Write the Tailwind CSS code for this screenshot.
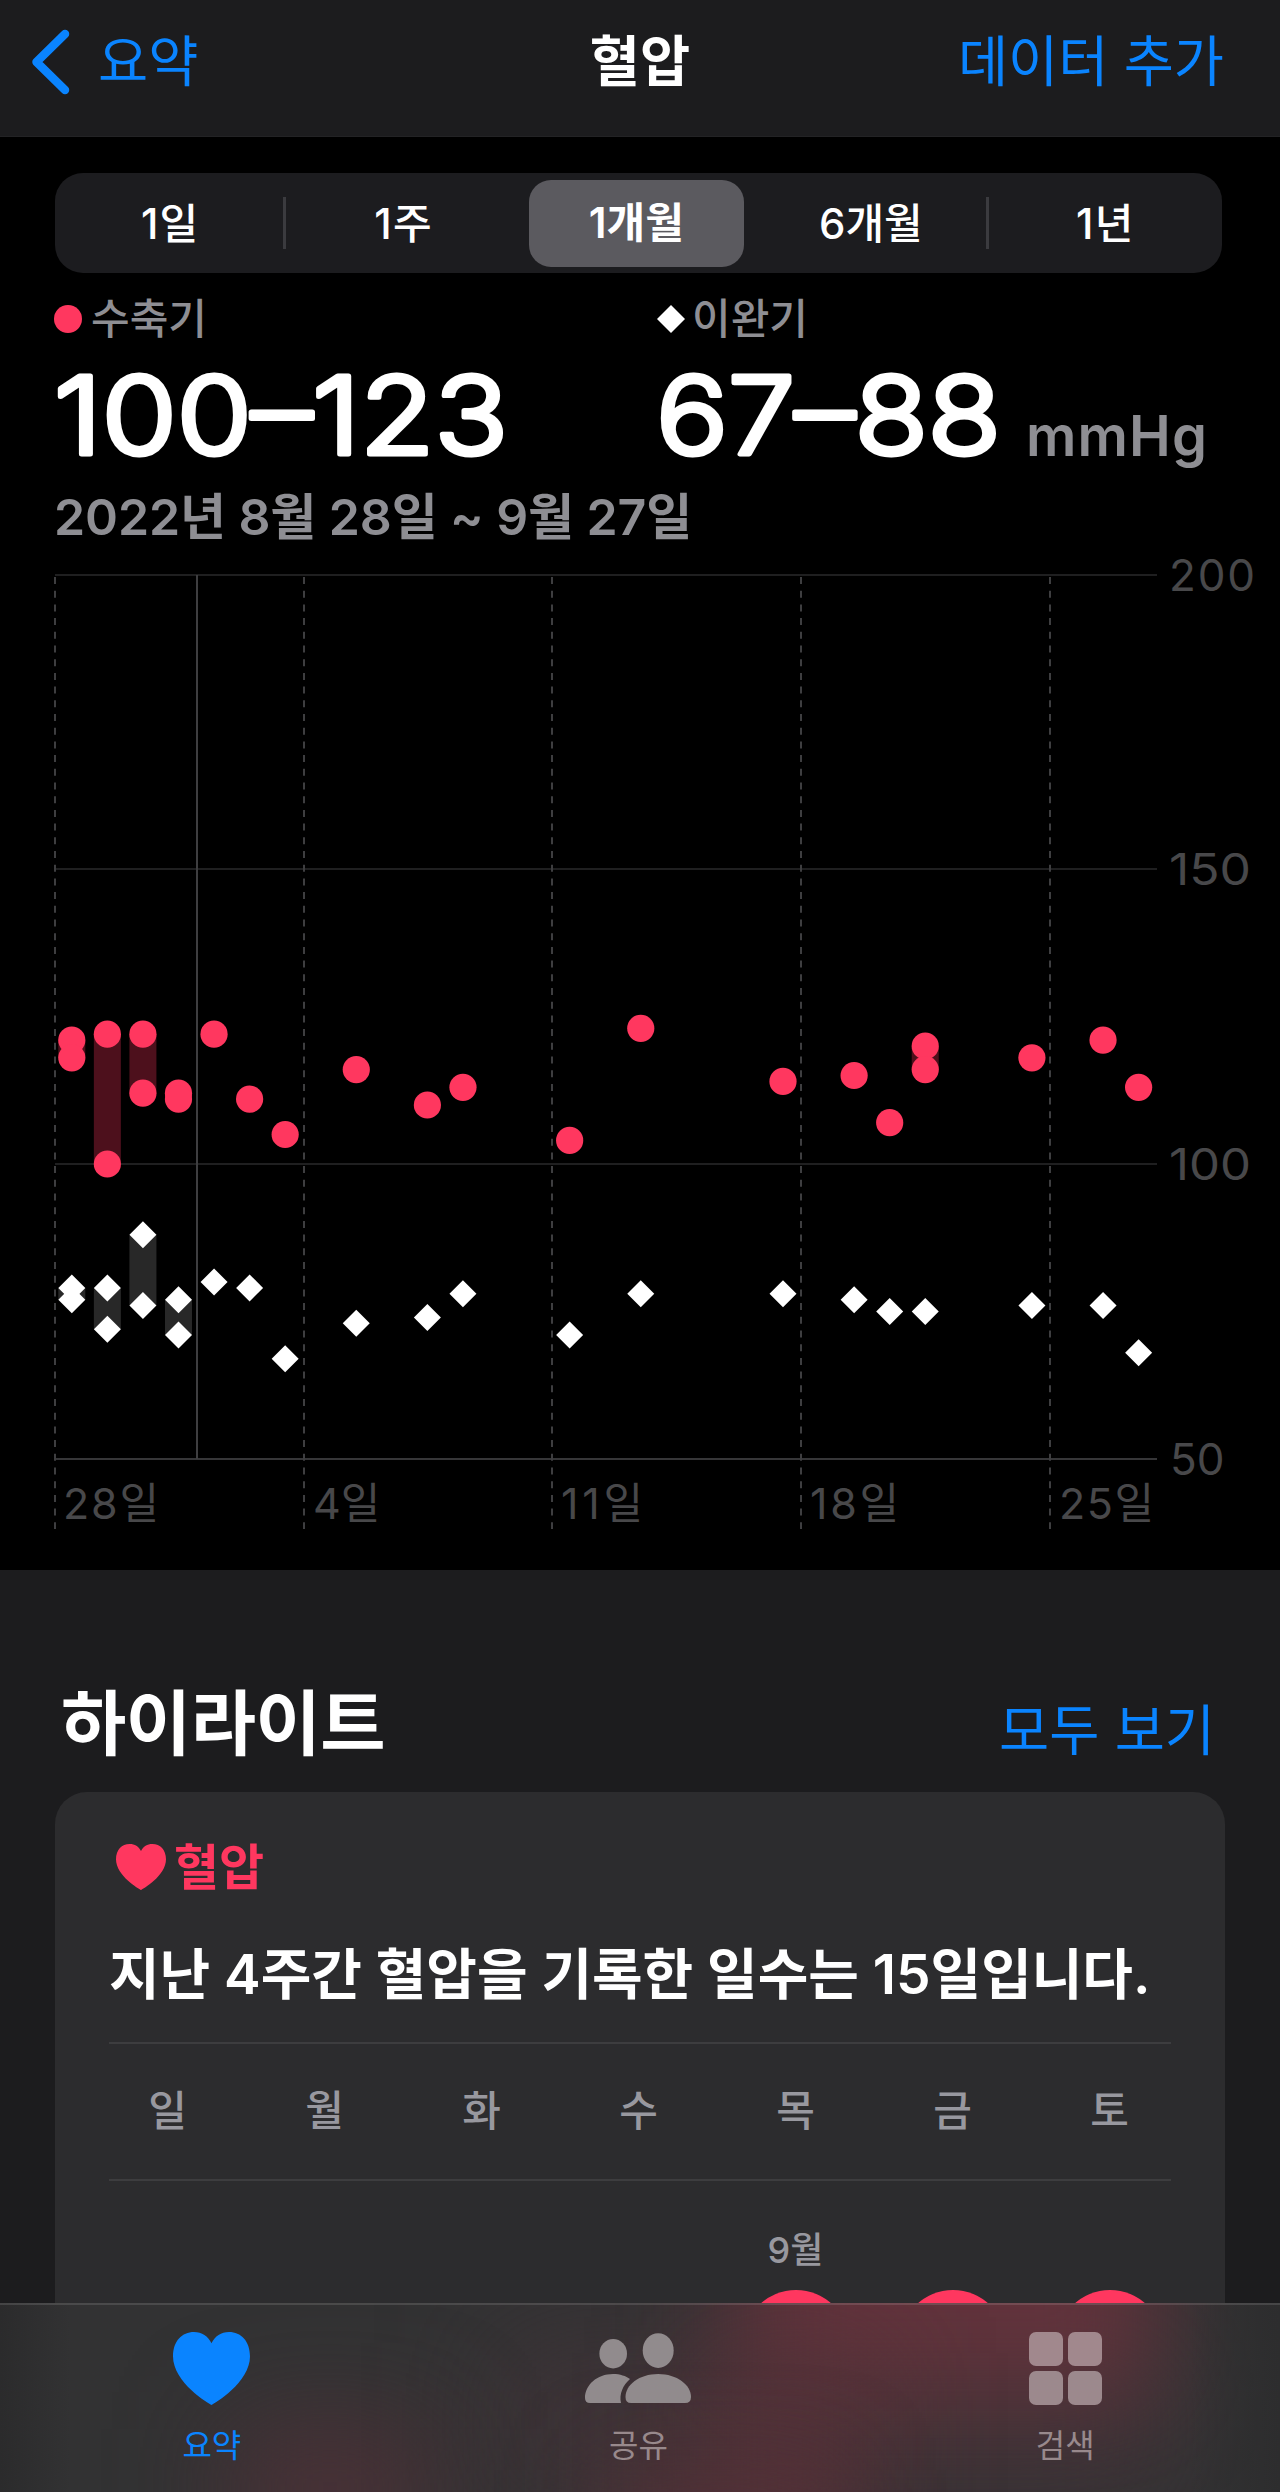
<!DOCTYPE html>
<html lang="ko">
<head>
    <meta charset="UTF-8">
    <meta name="viewport" content="width=device-width, initial-scale=1.0">
    <title>혈압</title>
    <script src="https://cdn.jsdelivr.net/npm/@tailwindcss/browser@4"></script>
</head>
<body class="bg-black text-white w-[1280px] h-[2492px] overflow-hidden flex flex-col relative font-['Inter','Noto_Sans_CJK_KR',sans-serif]">

    <header class="h-[137px] shrink-0 bg-[#1c1c1e] border-b border-[#232325] grid grid-cols-3 pb-[14px] items-center text-[54.5px] leading-none">
        <a class="flex items-center pl-[28px] text-[#0a84ff]">
            <svg class="w-[46px] h-[68px] mr-[24px] -mb-[1px]" viewBox="0 0 46 68" fill="none" stroke="#0a84ff" stroke-width="8.5" stroke-linecap="round" stroke-linejoin="round"><path d="M37 6 L8.500 34 L37 62"/></svg>
            <span>요약</span>
        </a>
        <h1 class="text-center font-semibold">혈압</h1>
        <a class="text-right pr-[56px] text-[#0a84ff] whitespace-nowrap">데이터 추가</a>
    </header>

    <section class="h-[1433px] shrink-0 flex flex-col">
        <div class="mt-[36px] ml-[55px] w-[1167px] h-[100px] rounded-[28px] bg-[#1c1c1f] grid grid-cols-5 items-center text-center text-[42px] leading-none font-medium relative">
            <span class="pt-[2px] pr-[3px] tracking-[0.03em]">1일</span>
            <span class="pt-[2px] pr-[3px] tracking-[0.03em]">1주</span>
            <span class="h-[87px] w-[215px] ml-[7px] rounded-[22px] bg-[#5b5a5f] flex items-center justify-center font-semibold">1개월</span>
            <span class="pt-[2px] pr-[2px]">6개월</span>
            <span class="pt-[2px] tracking-[0.03em]">1년</span>
            <i class="absolute left-[228px] top-[24px] w-[3px] h-[52px] bg-[#3b3b3f]"></i>
            <i class="absolute left-[931px] top-[24px] w-[3px] h-[52px] bg-[#3b3b3f]"></i>
        </div>

        <div class="flex pl-[54px] mt-[21px] h-[50px] items-center text-[42px] leading-none font-medium text-[#8e8e93]">
            <div class="w-[603px] flex items-center">
                <i class="w-7 h-7 rounded-full bg-[#ff375f] mr-[9px]"></i><span>수축기</span>
            </div>
            <div class="flex items-center">
                <svg class="w-7 h-7 mr-[7px]" viewBox="0 0 28 28"><path d="M14 0 L28 14 L14 28 L0 14 Z" fill="#fff"/></svg><span>이완기</span>
            </div>
        </div>

        <!-- rounded digits: light face with a round-joined outline -->
        <svg class="w-[1280px] h-[120px] mt-[12px] shrink-0 overflow-visible" viewBox="0 356 1280 120">
            <g class="text-[107px] font-light" fill="#fff" stroke="#fff" stroke-width="5" stroke-linejoin="round">
                <text x="54" y="454" textLength="454" lengthAdjust="spacingAndGlyphs">100–123</text>
                <text x="656" y="454" textLength="345" lengthAdjust="spacingAndGlyphs">67–88</text>
            </g>
            <text class="text-[56px] font-semibold" x="1026" y="456" textLength="181" fill="#8e8e93">mmHg</text>
        </svg>

        <p class="pl-[54px] mt-[13px] text-[50px] leading-[56px] font-semibold tracking-[-0.1px] text-[#8e8e93]">2022년 8월 28일 ~ 9월 27일</p>

        <svg id="chart" class="w-[1280px] h-[1015px] mt-auto shrink-0 overflow-visible" viewBox="0 555 1280 1015">
            <g stroke="#1f1f20" stroke-width="2">
                <path d="M55 575 H1157 M55 869 H1157 M55 1164 H1157"/>
                <path d="M55 1459 H1157" stroke="#363638"/>
                <path d="M197 575 V1459" stroke="#3e3e40"/>
            </g>
            <path d="M55 577 V1529 M304 577 V1529 M552 577 V1529 M801 577 V1529 M1050 577 V1529" stroke="#3e3e40" stroke-width="2" stroke-dasharray="7 6.7"/>
            <g id="bars"></g>
            <g id="marks"></g>
            <g class="text-[44px]" fill="#48484a">
                <text x="1169" y="591" textLength="86">200</text>
                <text x="1169" y="885" textLength="82" lengthAdjust="spacingAndGlyphs">150</text>
                <text x="1169" y="1180" textLength="82" lengthAdjust="spacingAndGlyphs">100</text>
                <text x="1170" y="1475">50</text>
            </g>
            <g class="text-[43px]" fill="#48484a">
                <text x="63" y="1519" textLength="96">28일</text>
                <text x="313" y="1519">4일</text>
                <text x="561" y="1519" textLength="82">11일</text>
                <text x="810" y="1519" textLength="89">18일</text>
                <text x="1059" y="1519" textLength="95">25일</text>
            </g>
        </svg>
    </section>

    <main class="flex-1 bg-[#1c1c1e] flex flex-col px-[55px] overflow-hidden">
        <div class="flex justify-between items-center h-[86px] mt-[112px] shrink-0 pl-[6px] pr-[10px] leading-none">
            <h2 class="text-[71px] font-bold -mt-[4px] tracking-[-0.5px]">하이라이트</h2>
            <a class="text-[54.5px] text-[#0a84ff] mt-[11px]">모두 보기</a>
        </div>

        <div class="mt-[24px] h-[720px] w-[1170px] shrink-0 rounded-[32px] bg-[#2c2c2e] px-[54px]">
            <div class="flex items-center pt-[48px] h-[102px] pl-[7px] text-[#ff375f] text-[49px] leading-none font-semibold">
                <svg class="w-[50px] h-[46px] mr-[8px]" viewBox="0 0 77 72" preserveAspectRatio="none" fill="#ff375f"><path d="M38.5 72 C36 71 0 50 0 24 C0 9 9 0 21 0 C29 0 35 4 38.5 11 C42 4 48 0 56 0 C68 0 77 9 77 24 C77 50 41 71 38.5 72 Z"/></svg>
                <span>혈압</span>
            </div>
            <p class="mt-[50px] h-[60px] text-[55px] leading-[60px] font-semibold whitespace-nowrap">지난 4주간 혈압을 기록한 일수는 15일입니다.</p>
            <div class="mt-[38px] border-y-2 border-[#3d3d3f] h-[139px]">
                <div class="-ml-[20px] w-[1099px] h-[133px] grid grid-cols-7 items-center text-center text-[42px] leading-none font-medium text-[#98989f]">
                    <span>일</span><span>월</span><span>화</span><span>수</span><span>목</span><span>금</span><span>토</span>
                </div>
            </div>
            <div class="-ml-[20px] w-[1099px] grid grid-cols-7 justify-items-center mt-[46px]">
                <div class="col-start-5 flex flex-col items-center">
                    <span class="text-[36px] leading-[47px] h-[63px] font-medium text-[#98989f]">9월</span>
                    <i class="w-[106px] h-[106px] rounded-full bg-[#ff375f]"></i>
                </div>
                <i class="w-[106px] h-[106px] mt-[63px] rounded-full bg-[#ff375f]"></i>
                <i class="w-[106px] h-[106px] mt-[63px] rounded-full bg-[#ff375f]"></i>
            </div>
        </div>
    </main>

    <nav class="absolute bottom-0 left-0 w-full h-[189px] text-[32px] leading-none text-[#98898c] bg-[#323233] overflow-hidden">
        <!-- blurred calendar dots showing through the bar -->
        <div class="absolute left-[500px] top-[40px] w-[660px] h-[160px] bg-[#48343a]/60 blur-[60px]"></div>
        <div class="absolute left-[735px] -top-[110px] w-[420px] h-[205px] bg-[#62333c] blur-[50px]"></div>
        <div class="absolute left-[700px] top-[50px] w-[180px] h-[190px] bg-[#563138]/70 blur-[55px]"></div>
        <div class="absolute left-[600px] top-[165px] w-[240px] h-[90px] bg-[#5d3138]/70 blur-[45px]"></div>
        <div class="absolute left-[230px] top-[125px] w-[200px] h-[120px] bg-[#543138]/80 blur-[55px]"></div>
        <div class="absolute left-0 top-0 w-[70px] h-full bg-linear-to-r from-[#2b2b2c] to-[#2b2b2c]/0"></div>
        <div class="absolute right-0 top-0 w-[90px] h-full bg-linear-to-l from-[#2d2d2e] to-[#2d2d2e]/0"></div>
        <div class="relative h-full border-t-2 border-white/12 grid grid-cols-3">
            <a class="flex flex-col items-center pt-[27px] pr-[3px] text-[#0a84ff]">
                <svg class="w-[77px] h-[73px] mb-[25px]" viewBox="0 0 77 72" preserveAspectRatio="none" fill="#0a84ff"><path d="M38.5 72 C36 71 0 50 0 24 C0 9 9 0 21 0 C29 0 35 4 38.5 11 C42 4 48 0 56 0 C68 0 77 9 77 24 C77 50 41 71 38.5 72 Z"/></svg>
                <span>요약</span>
            </a>
            <a class="flex flex-col items-center pt-[27px] pr-[3px]">
                <svg class="w-[106px] h-[73px] mb-[25px]" viewBox="586 2332 106 73" fill="#918b8d">
                    <ellipse cx="614.2" cy="2353.7" rx="13.8" ry="14.7"/>
                    <ellipse cx="659.2" cy="2350.6" rx="15.5" ry="17.3"/>
                    <path d="M591 2403 Q586 2403 586 2398 C586 2385 598 2374 614 2374 C621 2374 627 2376 631 2379 C624 2385 620 2394 622 2403 Z"/>
                    <path d="M632 2403 Q626.500 2403 626.500 2397 C626.500 2385 640 2374 659.200 2374 C678 2374 692 2385 692 2397 Q692 2403 686 2403 Z"/>
                </svg>
                <span>공유</span>
            </a>
            <a class="flex flex-col items-center pt-[27px] pr-[3px]">
                <div class="w-[73px] h-[73px] mb-[25px] grid grid-cols-2 gap-[5px]">
                    <i class="rounded-[7px] bg-[#a1888d]"></i><i class="rounded-[7px] bg-[#a1888d]"></i>
                    <i class="rounded-[7px] bg-[#9c898d]"></i><i class="rounded-[7px] bg-[#9c898d]"></i>
                </div>
                <span>검색</span>
            </a>
        </div>
    </nav>

    <script>
        // [day, systolic values, diastolic values]
        const readings = [
            [0, [121, 118], [79, 77]], [1, [122, 100], [79, 72]], [2, [122, 112], [88, 76]],
            [3, [112, 111], [77, 71]], [4, [122], [80]], [5, [111], [79]], [6, [105], [67]],
            [8, [116], [73]], [10, [110], [74]], [11, [113], [78]], [14, [104], [71]],
            [16, [123], [78]], [20, [114], [78]], [22, [115], [77]], [23, [107], [75]],
            [24, [120, 116], [75]], [27, [118], [76]], [29, [121], [76]], [30, [113], [68]]
        ];
        const px = d => 71.8 + d * 35.56;
        const py = v => 1164 - (v - 100) * 5.9;
        let bars = '', marks = '';

        readings.forEach(([d, sys, dia]) => {
            const x = px(d);
            [[sys, '#4d101c'], [dia, '#282828']].forEach(([v, color]) => {
                if (v.length > 1) {
                    bars += `<rect x="${x - 13.5}" y="${py(v[0])}" width="27" height="${py(v[1]) - py(v[0])}" fill="${color}"/>`;
                }
            });
            sys.forEach(v => { marks += `<circle cx="${x}" cy="${py(v)}" r="13.6" fill="#ff375f"/>`; });
            dia.forEach(v => { marks += `<path d="M${x} ${py(v) - 13.5} l13.5 13.5 l-13.5 13.5 l-13.5 -13.5 Z" fill="#fff"/>`; });
        });
        document.getElementById('bars').innerHTML = bars;
        document.getElementById('marks').innerHTML = marks;
    </script>
</body>
</html>
